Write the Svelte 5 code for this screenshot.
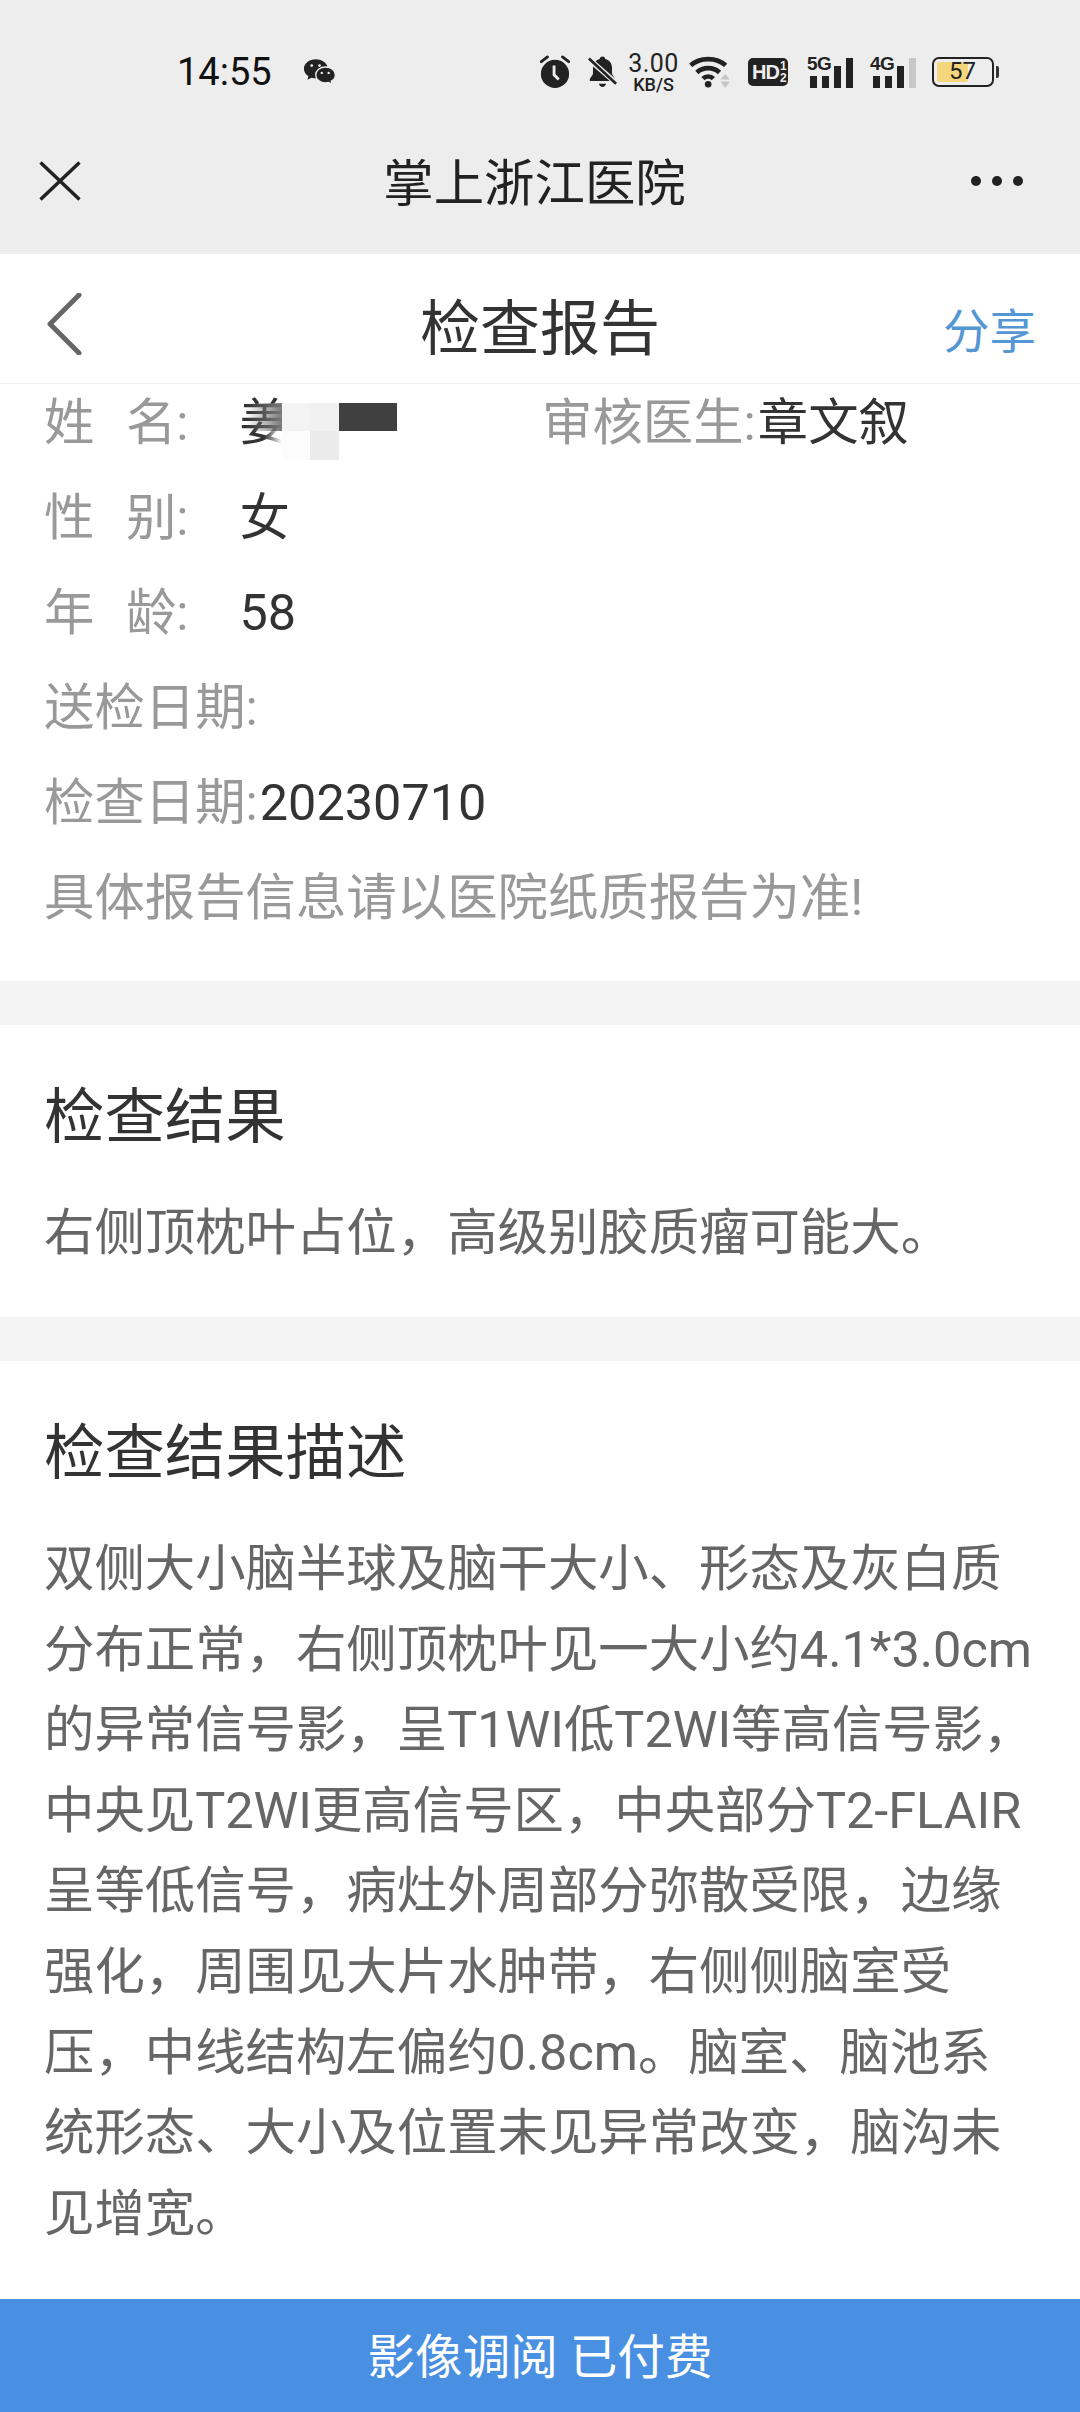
<script>
  const rows = [
    { label: '性 别:', value: '女' },
    { label: '年 龄:', value: '58' }
  ];
  const bars = [12, 12, 22, 30];
</script>

<div class="screen">
  <header class="wechat">
    <div class="status">
      <span class="time">14:55</span>
      <svg class="wx" width="33" height="28" viewBox="0 0 36 30">
        <path fill="#222" d="M14 1C6.800 1 1 5.600 1 11.400c0 3.300 1.900 6.200 4.900 8.100l-1.100 4 4.600-2.300c1.500.4 3 .6 4.600.6 7.200 0 13-4.700 13-10.400S21.200 1 14 1z" />
        <path fill="#222" stroke="#ededed" stroke-width="1.500" d="M24.600 9.500c-6 0-10.700 3.900-10.700 8.700s4.700 8.700 10.700 8.700c1.200 0 2.300-.2 3.400-.5l3.800 2-.9-3.400c2.700-1.600 4.400-4 4.400-6.800 0-4.800-4.700-8.700-10.700-8.700z" />
        <circle cx="9.500" cy="8" r="1.500" fill="#ededed" />
        <circle cx="18" cy="8" r="1.500" fill="#ededed" />
        <circle cx="20.500" cy="16" r="1.300" fill="#ededed" />
        <circle cx="28" cy="16" r="1.300" fill="#ededed" />
      </svg>
      <div class="status-right">
        <svg width="32" height="34" viewBox="0 0 34 36">
          <path stroke="#222" stroke-width="3" stroke-linecap="round" d="M2.500 7 9 2M31.500 7 25 2" />
          <circle cx="17" cy="20" r="15" fill="#222" />
          <path fill="none" stroke="#ededed" stroke-width="3" d="M16 11v10l5 5" />
        </svg>
        <svg class="bell" width="29" height="34" viewBox="0 0 32 36">
          <path fill="#222" d="M16 1c1.800 0 3 1.100 3 2.700 5 1.200 7.500 5 7.500 10v6.500l3.500 5.500v2.300H2v-2.300l3.500-5.500v-6.500c0-5 2.500-8.800 7.500-10C13 2.100 14.200 1 16 1zM12 31h8c-.5 2-2 3.500-4 3.500S12.500 33 12 31z" />
          <path stroke="#ededed" stroke-width="6" d="M0 3l32 28" />
          <path stroke="#222" stroke-width="3" d="M1 3l30 28" />
        </svg>
        <div class="speed"><b>3.00</b><small>KB/S</small></div>
        <svg class="wifi" width="44" height="34" viewBox="0 0 46 36">
          <path fill="none" stroke="#222" stroke-width="5" d="M1.500 11C11 2 29 2 38.500 11M8 18.500c6.500-6 17.500-6 24 0M14.500 25c3-3 8-3 11 0" />
          <circle cx="20" cy="31" r="3.500" fill="#222" />
          <path fill="#c4c4c4" d="M38 20l5 6H33zM33 28h10l-5 7z" />
        </svg>
        <div class="hd">HD<span><i>1</i><i>2</i></span></div>
        <div class="sig">
          <span class="net">5G</span>
          {#each bars as h}
            <i style="height: {h}px"></i>
          {/each}
        </div>
        <div class="sig second">
          <span class="net">4G</span>
          {#each bars as h, i}
            <i class:off={i === 3} style="height: {h}px"></i>
          {/each}
        </div>
        <div class="battery">
          <div class="cell"><span class="fill"></span><span class="pct">57</span></div>
          <span class="nub"></span>
        </div>
      </div>
    </div>
    <div class="wechat-bar">
      <svg width="42" height="40" viewBox="0 0 42 40">
        <path stroke="#222" stroke-width="3.500" d="M1.500 1.500l39 37M40.500 1.500l-39 37" />
      </svg>
      <h1>掌上浙江医院</h1>
      <div class="dots"><i></i><i></i><i></i></div>
    </div>
  </header>

  <nav class="nav">
    <svg width="36" height="62" viewBox="0 0 36 62">
      <path fill="none" stroke="#666" stroke-width="5" stroke-linecap="round" stroke-linejoin="round" d="M33 2 4 31l29 29" />
    </svg>
    <h2>检查报告</h2>
    <span class="share">分享</span>
  </nav>

  <section class="info">
    <div class="row first-row">
      <span class="label">姓 名:</span>
      <span class="value">姜</span>
      <div class="mosaic">
        <i class="fade-top"></i>
        <i class="fade-bottom"></i>
        <i class="c1"></i><i class="c2"></i><i class="c3"></i>
        <i class="c4"></i><i class="c5"></i>
      </div>
      <div class="reviewer"><span class="label">审核医生:</span><span class="doctor">章文叙</span></div>
    </div>
    {#each rows as r}
      <div class="row"><span class="label">{r.label}</span><span class="value">{r.value}</span></div>
    {/each}
    <div class="row"><span class="label">送检日期:</span></div>
    <div class="row"><span class="label">检查日期:</span><span class="date">20230710</span></div>
    <div class="row"><span class="label">具体报告信息请以医院纸质报告为准!</span></div>
  </section>

  <section class="card result">
    <h3>检查结果</h3>
    <p>右侧顶枕叶占位，高级别胶质瘤可能大。</p>
  </section>

  <section class="card desc">
    <h3>检查结果描述</h3>
    <p>双侧大小脑半球及脑干大小、形态及灰白质分布正常，右侧顶枕叶见一大小约4.1*3.0cm的异常信号影，呈T1WI低T2WI等高信号影，中央见T2WI更高信号区，中央部分T2-FLAIR呈等低信号，病灶外周部分弥散受限，边缘强化，周围见大片水肿带，右侧侧脑室受压，中线结构左偏约0.8cm。脑室、脑池系统形态、大小及位置未见异常改变，脑沟未见增宽。</p>
  </section>

  <div class="pay">影像调阅 已付费</div>
</div>

<style>
  :global(body) {
    margin: 0;
    background: #fff;
  }

  .screen {
    display: flex;
    flex-direction: column;
    width: 1080px;
    height: 2412px;
    overflow: hidden;
    background: #f4f4f4;
    font-family: Roboto, "Noto Sans CJK SC", sans-serif;
  }

  h1, h2, h3, p {
    margin: 0;
    font-weight: 400;
  }

  .wechat {
    flex: none;
    height: 254px;
    box-sizing: border-box;
    padding-top: 36px;
    background: #ededed;
  }

  .status {
    display: flex;
    align-items: center;
    height: 72px;
    padding-left: 177px;
  }

  .time {
    font-size: 38px;
    color: #111;
    margin-right: 31px;
  }

  .status-right {
    display: flex;
    align-items: center;
    margin-left: auto;
    margin-right: 81px;
  }

  .bell {
    margin-left: 17px;
  }

  .speed {
    display: flex;
    flex-direction: column;
    align-items: center;
    width: 49px;
    margin-left: 12px;
    color: #222;
  }

  .speed b {
    font-weight: 400;
    font-size: 25px;
    letter-spacing: 0.5px;
    line-height: 25px;
  }

  .speed small {
    font-size: 18px;
    font-weight: 500;
    line-height: 18px;
  }

  .wifi {
    margin-left: 11px;
  }

  .hd {
    display: flex;
    align-items: center;
    gap: 1px;
    width: 40px;
    height: 28px;
    box-sizing: border-box;
    margin-left: 15px;
    padding-left: 4px;
    background: #222;
    border-radius: 5px;
    color: #ededed;
    font: 700 20px/1 "Liberation Sans", sans-serif;
    letter-spacing: -1px;
  }

  .hd span {
    display: flex;
    flex-direction: column;
    font-size: 12px;
    letter-spacing: 0;
  }

  .hd i {
    font-style: normal;
    line-height: 12px;
  }

  .sig {
    position: relative;
    display: flex;
    align-items: flex-end;
    gap: 5px;
    height: 32px;
    margin-left: 19px;
    padding-left: 3px;
  }

  .sig.second {
    margin-left: 17px;
  }

  .sig i {
    width: 7px;
    background: #222;
  }

  .sig i.off {
    background: #c8c8c8;
  }

  .net {
    position: absolute;
    left: 0;
    top: -2px;
    font: 700 19px/1 "Liberation Sans", sans-serif;
    letter-spacing: -0.5px;
    color: #222;
  }

  .battery {
    display: flex;
    align-items: center;
    gap: 2px;
    margin-left: 16px;
  }

  .cell {
    position: relative;
    width: 62px;
    height: 30px;
    box-sizing: border-box;
    border: 2.500px solid #222;
    border-radius: 7px;
  }

  .fill {
    position: absolute;
    left: 3px;
    top: 3px;
    bottom: 3px;
    width: 31px;
    background: #f5d67c;
    border-radius: 2px;
  }

  .pct {
    position: absolute;
    left: 15px;
    top: 0;
    font-size: 24px;
    line-height: 25px;
    color: #222;
  }

  .nub {
    width: 3px;
    height: 12px;
    background: #333;
    border-radius: 0 2px 2px 0;
  }

  .wechat-bar {
    position: relative;
    display: flex;
    align-items: center;
    justify-content: space-between;
    height: 100px;
    margin-top: 23px;
    padding: 0 57px 0 39px;
    box-sizing: border-box;
  }

  .wechat-bar h1 {
    position: absolute;
    left: 0;
    right: 11px;
    margin-top: 6px;
    text-align: center;
    font-size: 50.400px;
    line-height: 100px;
    color: #222;
  }

  .dots {
    display: flex;
    gap: 11px;
  }

  .dots i {
    width: 10px;
    height: 10px;
    background: #222;
    border-radius: 50%;
  }

  .nav {
    position: relative;
    flex: none;
    display: flex;
    align-items: center;
    justify-content: space-between;
    height: 130px;
    box-sizing: border-box;
    padding: 10px 44px 0 46px;
    background: #fff;
    border-bottom: 1px solid #f0f0f0;
  }

  .nav h2 {
    position: absolute;
    left: 0;
    right: 0;
    margin-top: 12px;
    text-align: center;
    font-size: 60px;
    line-height: 128px;
    color: #333;
  }

  .share {
    margin-top: 8px;
    font-size: 46.500px;
    color: #5596d4;
  }

  .info {
    flex: none;
    height: 597px;
    box-sizing: border-box;
    padding: 0 44px;
    background: #fff;
  }

  .row {
    position: relative;
    display: flex;
    height: 95px;
    align-items: center;
    font-size: 50.400px;
    line-height: 1;
    color: #999;
  }

  .first-row {
    height: 78px;
    margin-bottom: 9px;
  }

  .label {
    white-space: pre;
    word-spacing: 19px;
  }

  .value {
    color: #333;
    margin-left: 51px;
  }

  .date {
    color: #333;
    margin-left: 2px;
  }

  .reviewer {
    position: absolute;
    left: 498px;
    color: #999;
  }

  .doctor {
    color: #333;
    margin-left: 2px;
  }

  .mosaic {
    position: absolute;
    left: 238px;
    top: 19px;
    display: grid;
    grid-template-columns: 28px 29px 58px;
    grid-template-rows: 28px 29px;
  }

  .mosaic i {
    display: block;
  }

  .mosaic .fade-top {
    position: absolute;
    left: -36px;
    top: 0;
    width: 36px;
    height: 28px;
    background: linear-gradient(to right, rgba(120, 120, 120, 0), #7a7a7a);
  }

  .mosaic .fade-bottom {
    position: absolute;
    left: -18px;
    top: 28px;
    width: 18px;
    height: 29px;
    background: linear-gradient(to right, rgba(255, 255, 255, 0), #fff);
  }

  .c1 {
    background: #f3f3f3;
  }

  .c2 {
    background: #f1f1f1;
  }

  .c3 {
    background: #404040;
  }

  .c4 {
    background: #fcfcfc;
  }

  .c5 {
    background: #ebebeb;
  }

  .card {
    flex: none;
    margin-top: 44px;
    padding: 0 44px;
    background: #fff;
  }

  .card h3 {
    font-size: 60.400px;
    line-height: 90px;
    color: #333;
  }

  .card p {
    font-size: 50.400px;
    line-height: 80.600px;
    color: #666;
  }

  .result {
    height: 292px;
    box-sizing: border-box;
    padding-top: 48px;
  }

  .result h3 {
    margin-bottom: 30px;
  }

  .desc {
    flex: 1;
    padding-top: 48px;
  }

  .desc h3 {
    margin-bottom: 30px;
  }

  .pay {
    flex: none;
    height: 113px;
    background: #4a90e2;
    color: #fff;
    text-align: center;
    font-size: 47.600px;
    line-height: 118px;
  }
</style>
